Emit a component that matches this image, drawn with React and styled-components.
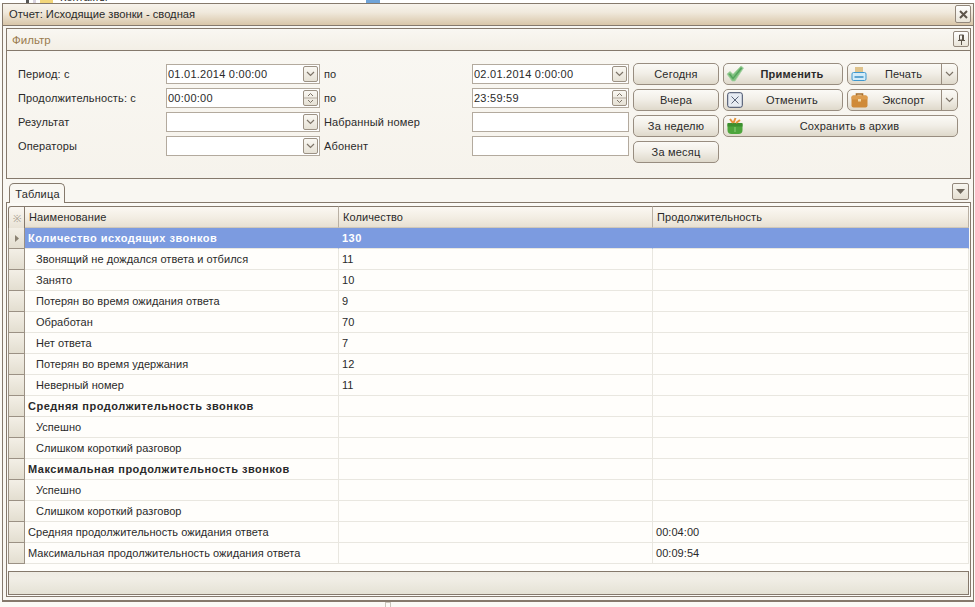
import React from "react";
import styled, { createGlobalStyle } from "styled-components";

const Global = createGlobalStyle`
  html, body { margin: 0; padding: 0; background: #fbfaf6; }
  * { box-sizing: border-box; }
`;

const line = "#85796c";

const Page = styled.div`
  width: 975px; height: 607px; overflow: hidden; background: #fbfaf6;
  font-family: "Liberation Sans", Arial, sans-serif; font-size: 11px; color: #2a2a2a;
  display: flex; flex-direction: column;
`;
const TopStrip = styled.div`
  height: 3px; overflow: hidden; display: flex; align-items: flex-end; gap: 4px; padding-left: 26px; background: #fff;
`;
const StripIcon = styled.span`
  width: ${p => p.$w || 8}px; height: 3px; background: ${p => p.$c}; flex: none;
  margin-left: ${p => p.$gap || 0}px;
`;
const StripText = styled.span`
  font-size: 11px; line-height: 11px; height: 3px; margin-left: 3px; align-self: flex-start; margin-top: -8px; overflow: visible;
`;
const Win = styled.div`
  margin-left: 2px; width: 972px; height: 599px; flex: none;
  border: 1px solid ${line}; border-bottom-width: 2px; background: #f9f7f2;
  padding: 0 2px 3px 3px; display: flex; flex-direction: column;
`;
const TitleBar = styled.div`
  height: 22px; margin: 0 -2px 0 -3px; padding: 0 2px 1px 6px; flex: none;
  display: flex; align-items: center; justify-content: space-between; font-size: 11.2px;
  background: linear-gradient(#f7f3ec, #f0e9dc 40%, #d9c6a8);
  border-bottom: 1px solid ${line};
`;
const CloseBtn = styled.button`
  width: 16px; height: 18px; padding: 0; border: 1px solid #92877b; border-radius: 2px; background: linear-gradient(#fff, #e9e4d8);
  display: flex; align-items: center; justify-content: center; font-family: inherit;
`;
const FilterPanel = styled.section`
  margin-top: 2px; height: 151px; flex: none; border: 1px solid ${line}; display: flex; flex-direction: column;
`;
const FilterHead = styled.div`
  height: 22px; flex: none; border-bottom: 1px solid ${line}; padding: 0 1px 0 5px;
  display: flex; align-items: center; justify-content: space-between; color: #9a7b4f; font-size: 11.5px;
  background: linear-gradient(#f9f7f2, #f3efe6);
`;
const PinBtn = styled(CloseBtn)`
  height: 16px; margin-top: -1px;
`;
const FilterBody = styled.div`
  flex: 1; display: flex; align-items: flex-start; padding: 12px 0 0 11px; gap: 4px;
  background: linear-gradient(#f9f7f2, #f6f3ec);
`;
const Form = styled.div`
  margin-top: 1px; display: grid; grid-template-columns: 148px 154px 152px 157px; row-gap: 4px; grid-auto-rows: 20px;
`;
const FieldLabel = styled.label`
  display: flex; align-items: center; white-space: nowrap; letter-spacing: .15px;
  margin-left: ${p => (p.$second ? "4px" : "0")};
`;
const Input = styled.div`
  border: 1px solid #b3aa9e; background: #fff; display: flex; align-items: center; justify-content: space-between;
  padding: 0 1px 0 1px; font-size: 11px; letter-spacing: .25px;
`;
const Arrow = styled.span`
  width: 15px; height: 16px; border: 1px solid #9b9184; border-radius: 2px; background: linear-gradient(#faf8f3, #e6e1d5);
  display: flex; align-items: center; justify-content: center; flex: none;
`;
const Buttons = styled.div`
  display: grid; grid-template-columns: 86px 120px 111px; column-gap: 4px; row-gap: 4px; grid-auto-rows: 22px;
`;
const Btn = styled.button`
  border: 1px solid #988d80; border-radius: 5px; background: linear-gradient(#fbfaf6, #f2efe8 45%, #dfd9cb);
  font: inherit; color: #2a2a2a; padding: 0 2px 1px 2px; display: flex; align-items: center; letter-spacing: .2px;
  font-weight: ${p => (p.$bold ? 700 : 400)};
  grid-column: ${p => p.$span || "auto"};
`;
const BtnLabel = styled.span`
  flex: 1; text-align: center;
`;
const BtnIcon = styled.span`
  width: 18px; height: 18px; flex: none; display: flex; align-items: center; justify-content: center;
`;
const SplitBtn = styled(Btn)`
  padding: 0; overflow: hidden;
`;
const SplitMain = styled.span`
  flex: 1; display: flex; align-items: center; padding: 0 2px 1px 2px; height: 100%;
`;
const SplitDrop = styled.span`
  width: 16px; height: 100%; border-left: 1px solid #988d80; display: flex; align-items: center; justify-content: center; flex: none;
`;
const TabRow = styled.div`
  height: 24px; flex: none; display: flex; justify-content: space-between; align-items: flex-end; padding-left: 3px; margin-bottom: -1px; position: relative;
`;
const Tab = styled.div`
  width: 56px; height: 20px; border: 1px solid ${line}; border-bottom: 0; border-radius: 5px 5px 0 0; background: #f9f7f2;
  display: flex; align-items: center; justify-content: center; letter-spacing: .2px; position: relative; z-index: 1; padding-left: 1px;
`;
const TabMenu = styled.button`
  width: 17px; height: 17px; padding: 0; margin: 0 2px 3px 0; border: 1px solid #92877b; border-radius: 2px; background: linear-gradient(#f8f6f0, #e4ded1);
  display: flex; align-items: center; justify-content: center;
`;
const TablePanel = styled.section`
  flex: 1; min-height: 0; border: 1px solid ${line}; background: #fbfaf6; padding: 3px 1px 1px 1px; display: flex; flex-direction: column;
`;
const Grid = styled.div`
  flex: 1; min-height: 0; background: #fffefb;
`;
const Row = styled.div`
  display: grid; grid-template-columns: 17px 314px 314px 1fr; height: ${p => (p.$head ? 22 : 21)}px;
`;
const Corner = styled.div`
  border: 1px solid ${line}; border-width: 1px 1px 0 1px; border-radius: 3px 0 0 0; background: linear-gradient(#faf7f2, #e9e3d6);
  display: flex; align-items: center; justify-content: center; color: #a79d8e; font-size: 10px;
`;
const HeadCell = styled.div`
  border-top: 1px solid ${line}; border-right: 1px solid #b9b0a3; border-bottom: 1px solid #cfc8ba;
  background: linear-gradient(#fbf8f3, #f3eee4 50%, #e7e0d2);
  padding-left: 4px; display: flex; align-items: center; letter-spacing: .1px;
`;
const Indicator = styled.div`
  border: 1px solid #9b9184; border-width: 0 1px 1px 1px; background: linear-gradient(#f3efe6, #e3ded0);
  display: flex; align-items: center; justify-content: center;
`;
const Cell = styled.div`
  display: flex; align-items: center; white-space: nowrap;
  letter-spacing: ${p => (p.$bold ? ".5px" : ".05px")};
  padding-left: ${p => (p.$indent ? 11 : 3)}px;
  font-weight: ${p => (p.$bold ? 700 : 400)};
  color: ${p => (p.$sel ? "#fff" : "#2a2a2a")};
  background: ${p => (p.$sel ? "#7c9be0" : "transparent")};
  border-bottom: 1px solid #e9e7e0;
  border-right: 1px solid ${p => (p.$sel ? "#7c9be0" : "#e9e7e0")};
`;
const Footer = styled.div`
  height: 24px; flex: none; border: 1px solid ${line}; background: linear-gradient(#efece4, #f1eee6 30%, #e5e2d5);
`;
const BottomStrip = styled.div`
  flex: 1; padding-left: 385px;
`;
const Stub = styled.span`
  display: block; width: 6px; height: 5px; border: 1px solid #c9c5bb; border-bottom: 0;
`;

const Down = () => (
  <svg width="9" height="6" viewBox="0 0 9 6"><path d="M1 1l3.5 3.5L8 1" fill="none" stroke="#7d7468" strokeWidth="1.2" /></svg>
);
const SpinIcon = () => (
  <Arrow>
    <svg width="13" height="14" viewBox="0 0 13 14">
      <path d="M4 5l2.5-2.5L9 5M4 9l2.5 2.5L9 9" fill="none" stroke="#7d7468" />
      <path d="M0 7h13" stroke="#b3aa9e" />
    </svg>
  </Arrow>
);
const Check = () => (
  <svg width="18" height="17" viewBox="0 0 18 17">
    <path d="M1 9l3-2.5 3 2.8L15 1l2.5 2L9 16H6z" fill="#7fc07f" stroke="#a9d3a4" strokeWidth=".8" />
    <path d="M3.5 9l3.5 4.5L15.5 3" fill="none" stroke="#53a25c" strokeWidth="1.3" />
  </svg>
);
const Cancel = () => (
  <svg width="16" height="16" viewBox="0 0 16 16">
    <rect x=".7" y=".7" width="14.6" height="14.6" rx="2" fill="#e6ebf2" stroke="#3f4a66" strokeWidth="1" />
    <path d="M4.5 4.5l7 7M11.5 4.5l-7 7" stroke="#5a6478" strokeWidth="1" />
  </svg>
);
const Printer = () => (
  <svg width="16" height="16" viewBox="0 0 16 16">
    <rect x="4" y="1" width="8" height="6" fill="#dfc38c" />
    <rect x="1" y="6.5" width="14" height="8" rx="1.5" fill="#d3ecf8" stroke="#3e98cf" />
    <path d="M3.5 11h9" stroke="#3a8fc4" strokeWidth="1.3" />
  </svg>
);
const Case = () => (
  <svg width="17" height="16" viewBox="0 0 17 16">
    <path d="M5.5 4V2h6v2" fill="none" stroke="#a76d28" strokeWidth="1.6" />
    <rect x=".5" y="3.5" width="16" height="12" rx="2" fill="#cf8a38" />
    <rect x=".5" y="3.5" width="16" height="4" rx="1.5" fill="#dd9d4e" />
    <rect x="7" y="7" width="3" height="2.5" fill="#f3d9a8" />
  </svg>
);
const Bag = () => (
  <svg width="18" height="18" viewBox="0 0 18 18">
    <path d="M1.5 7h15v6a4 4 0 0 1-4 4h-7a4 4 0 0 1-4-4z" fill="#4da53c" />
    <path d="M1.5 6h15v3.5h-15z" fill="#3c8f2f" />
    <path d="M4 2l3 4M9.5 1L7.5 6M14 3l-4 3" stroke="#e4923a" strokeWidth="2" />
    <path d="M9 10v5" stroke="#8fd07d" />
  </svg>
);

const rows = [
  { name: "Количество исходящих звонков", count: "130", bold: true, sel: true, arrow: true },
  { name: "Звонящий не дождался ответа и отбился", count: "11", indent: true },
  { name: "Занято", count: "10", indent: true },
  { name: "Потерян во время ожидания ответа", count: "9", indent: true },
  { name: "Обработан", count: "70", indent: true },
  { name: "Нет ответа", count: "7", indent: true },
  { name: "Потерян во время удержания", count: "12", indent: true },
  { name: "Неверный номер", count: "11", indent: true },
  { name: "Средняя продолжительность звонков", bold: true },
  { name: "Успешно", indent: true },
  { name: "Слишком короткий разговор", indent: true },
  { name: "Максимальная продолжительность звонков", bold: true },
  { name: "Успешно", indent: true },
  { name: "Слишком короткий разговор", indent: true },
  { name: "Средняя продолжительность ожидания ответа", time: "00:04:00" },
  { name: "Максимальная продолжительность ожидания ответа", time: "00:09:54" },
];

const Field = ({ value, kind }) => (
  <Input>
    <span>{value}</span>
    {kind === "drop" && <Arrow><Down /></Arrow>}
    {kind === "spin" && <SpinIcon />}
  </Input>
);

export default function App() {
  return (
    <Page>
      <Global />
      <TopStrip>
        <StripIcon $w={3} $c="#555" /><StripIcon $w={3} $c="#d9d3e0" /><StripIcon $w={13} $c="#f3d67a" />
        <StripText>Контакты</StripText>
        <StripIcon $w={14} $c="#6fa3d8" $gap={254} />
      </TopStrip>
      <Win>
        <TitleBar>
          <span>Отчет: Исходящие звонки - сводная</span>
          <CloseBtn aria-label="Закрыть">
            <svg width="9" height="9" viewBox="0 0 9 9"><path d="M1 1l7 7M8 1L1 8" stroke="#5d554b" strokeWidth="2" /></svg>
          </CloseBtn>
        </TitleBar>
        <FilterPanel>
          <FilterHead>
            <span>Фильтр</span>
            <PinBtn aria-label="Закрепить">
              <svg width="9" height="11" viewBox="0 0 9 11"><path d="M2.5 1h4v5h-4zM1 6.5h7M4.5 7v4M5.5 1v5" fill="none" stroke="#5d554b" /></svg>
            </PinBtn>
          </FilterHead>
          <FilterBody>
            <Form>
              <FieldLabel>Период: с</FieldLabel>
              <Field value="01.01.2014 0:00:00" kind="drop" />
              <FieldLabel $second>по</FieldLabel>
              <Field value="02.01.2014 0:00:00" kind="drop" />
              <FieldLabel>Продолжительность: с</FieldLabel>
              <Field value="00:00:00" kind="spin" />
              <FieldLabel $second>по</FieldLabel>
              <Field value="23:59:59" kind="spin" />
              <FieldLabel>Результат</FieldLabel>
              <Field kind="drop" />
              <FieldLabel $second>Набранный номер</FieldLabel>
              <Field />
              <FieldLabel>Операторы</FieldLabel>
              <Field kind="drop" />
              <FieldLabel $second>Абонент</FieldLabel>
              <Field />
            </Form>
            <Buttons>
              <Btn><BtnLabel>Сегодня</BtnLabel></Btn>
              <Btn $bold><BtnIcon><Check /></BtnIcon><BtnLabel>Применить</BtnLabel></Btn>
              <SplitBtn>
                <SplitMain><BtnIcon><Printer /></BtnIcon><BtnLabel>Печать</BtnLabel></SplitMain>
                <SplitDrop><Down /></SplitDrop>
              </SplitBtn>
              <Btn><BtnLabel>Вчера</BtnLabel></Btn>
              <Btn><BtnIcon><Cancel /></BtnIcon><BtnLabel>Отменить</BtnLabel></Btn>
              <SplitBtn>
                <SplitMain><BtnIcon><Case /></BtnIcon><BtnLabel>Экспорт</BtnLabel></SplitMain>
                <SplitDrop><Down /></SplitDrop>
              </SplitBtn>
              <Btn><BtnLabel>За неделю</BtnLabel></Btn>
              <Btn $span="span 2"><BtnIcon><Bag /></BtnIcon><BtnLabel>Сохранить в архив</BtnLabel></Btn>
              <Btn><BtnLabel>За месяц</BtnLabel></Btn>
            </Buttons>
          </FilterBody>
        </FilterPanel>
        <TabRow>
          <Tab>Таблица</Tab>
          <TabMenu aria-label="Меню">
            <svg width="9" height="5" viewBox="0 0 9 5"><path d="M0 0h9L4.5 5z" fill="#6d655a" /></svg>
          </TabMenu>
        </TabRow>
        <TablePanel>
          <Grid>
            <Row $head>
              <Corner>※</Corner>
              <HeadCell>Наименование</HeadCell>
              <HeadCell>Количество</HeadCell>
              <HeadCell>Продолжительность</HeadCell>
            </Row>
            {rows.map((r, i) => (
              <Row key={i}>
                <Indicator>
                  {r.arrow && <svg width="4" height="7" viewBox="0 0 4 7"><path d="M0 0l4 3.5L0 7z" fill="#8a8172" /></svg>}
                </Indicator>
                <Cell $bold={r.bold} $sel={r.sel} $indent={r.indent}>{r.name}</Cell>
                <Cell $bold={r.bold} $sel={r.sel}>{r.count}</Cell>
                <Cell $sel={r.sel}>{r.time}</Cell>
              </Row>
            ))}
          </Grid>
          <Footer />
        </TablePanel>
      </Win>
      <BottomStrip><Stub /></BottomStrip>
    </Page>
  );
}
